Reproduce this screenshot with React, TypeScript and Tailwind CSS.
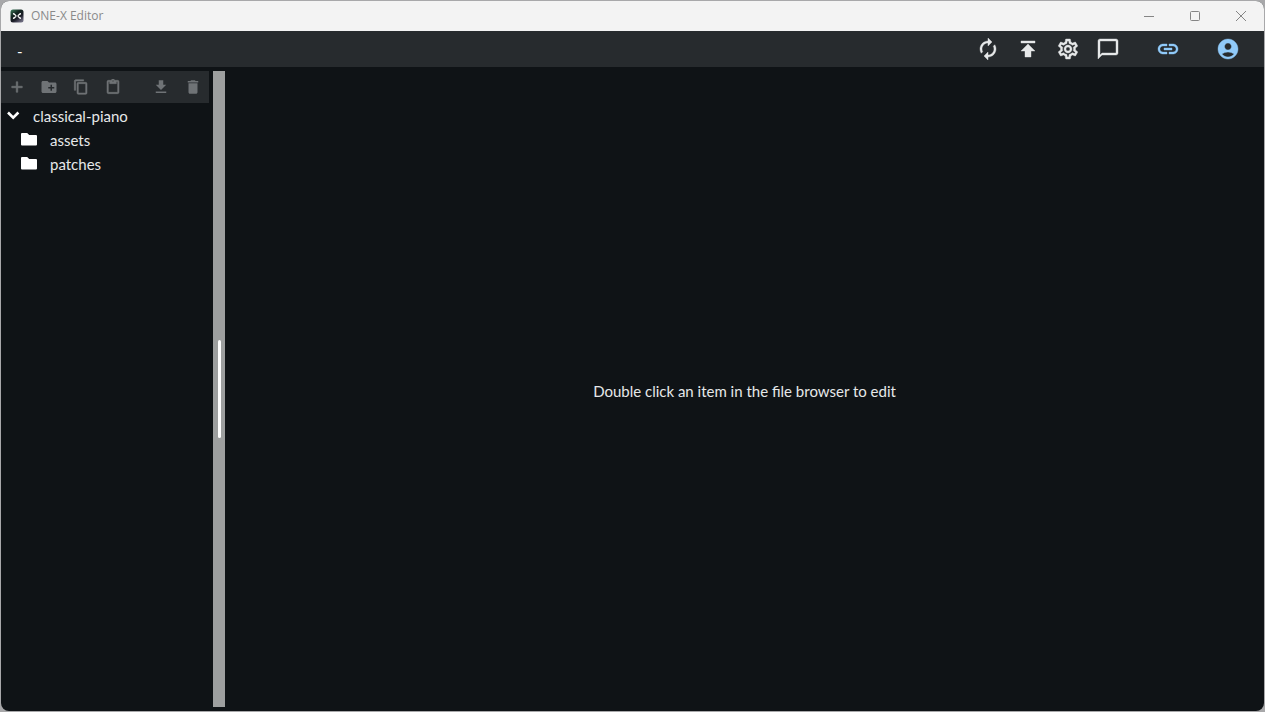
import React from "react";
import {
  MdAccountCircle,
  MdAdd,
  MdAutorenew,
  MdChatBubbleOutline,
  MdContentCopy,
  MdContentPaste,
  MdCreateNewFolder,
  MdDelete,
  MdFileDownload,
  MdLink,
  MdOutlineSettings,
  MdPublish,
} from "react-icons/md";

type ButtonProps = { label: string; children: React.ReactNode };

function AppIcon() {
  return (
    <svg viewBox="0 0 14 14" className="size-[14px]" aria-hidden="true">
      <defs>
        <linearGradient id="logo" x1="0" y1="0" x2="0.7" y2="1">
          <stop offset="0" stopColor="#3f8060" />
          <stop offset="0.4" stopColor="#12241f" />
          <stop offset="0.7" stopColor="#1c1d28" />
          <stop offset="1" stopColor="#6a687c" />
        </linearGradient>
      </defs>
      <rect x="0.5" y="0.5" width="13" height="13" rx="2.5" fill="url(#logo)" />
      <path d="M3.600 4.700 6.300 6.700M10.400 4.700 7.700 6.700M3.600 9.300 6.300 7.300M10.400 9.300 7.700 7.300" stroke="#fff" strokeWidth="1.200" />
      <g fill="#fff">
        <circle cx="3.700" cy="4.700" r="0.800" />
        <circle cx="10.300" cy="4.700" r="0.800" />
        <circle cx="3.700" cy="9.300" r="0.800" />
        <circle cx="10.300" cy="9.300" r="0.800" />
      </g>
    </svg>
  );
}

function WindowButton({ label, children }: ButtonProps) {
  return (
    <button type="button" aria-label={label} className="flex h-full w-[46px] items-center justify-center">
      <svg viewBox="0 0 12 12" className="size-3" fill="none" stroke="#858585" aria-hidden="true">
        {children}
      </svg>
    </button>
  );
}

function HeaderButton({ label, children }: ButtonProps) {
  return (
    <button type="button" aria-label={label} className="flex h-9 w-10 items-center justify-center [&_path[fill=none]]:stroke-none [&_svg]:stroke-[0.4]">
      {children}
    </button>
  );
}

function FileButton({ label, children }: ButtonProps) {
  return (
    <button type="button" aria-label={label} className="flex size-8 items-center justify-center [&_path[fill=none]]:stroke-none">
      {children}
    </button>
  );
}

function FolderRow({ name }: { name: string }) {
  return (
    <li>
      <button type="button" className="flex h-6 w-full items-center gap-3 pl-[19px] text-left">
        <svg viewBox="0 0 18 18" className="size-[18px]" fill="#fff" aria-hidden="true">
          <path d="M2 2h5.2l2 2H16q1 0 1 1v8.5q0 1-1 1H2q-1 0-1-1V3q0-1 1-1z" />
        </svg>
        <span>{name}</span>
      </button>
    </li>
  );
}

export default function App() {
  return (
    <div className="h-screen bg-[#a8a8aa] p-px font-['Lato',sans-serif] text-[#e6e8e9]">
      <div className="flex h-full flex-col overflow-hidden rounded-lg bg-[#0f1316]">
        <div className="flex h-[30px] shrink-0 items-center bg-[#f3f3f3] pb-px pl-[9px]">
          <AppIcon />
          <h1 className="pl-[7px] font-['Open_Sans',sans-serif] text-xs text-[#8a8a8a]">ONE-X Editor</h1>
          <div className="ml-auto flex h-full">
            <WindowButton label="Minimize">
              <path d="M1 6.5h10" />
            </WindowButton>
            <WindowButton label="Maximize">
              <rect x="1.5" y="1.5" width="9" height="9" rx="1" />
            </WindowButton>
            <WindowButton label="Close">
              <path d="M1 1l10 10M11 1 1 11" />
            </WindowButton>
          </div>
        </div>

        <header className="flex h-9 shrink-0 items-center bg-[#272b2e] px-4">
          <span className="pt-1 text-[15px] text-white">-</span>
          <div className="ml-auto flex">
            <HeaderButton label="Sync"><MdAutorenew size={24} /></HeaderButton>
            <HeaderButton label="Publish"><MdPublish size={24} /></HeaderButton>
            <HeaderButton label="Settings"><MdOutlineSettings size={24} /></HeaderButton>
            <HeaderButton label="Feedback"><MdChatBubbleOutline size={24} /></HeaderButton>
          </div>
          <div className="ml-5 flex gap-5 text-[#90caf9]">
            <HeaderButton label="Connection"><MdLink size={24} /></HeaderButton>
            <HeaderButton label="Account"><MdAccountCircle size={24} /></HeaderButton>
          </div>
        </header>

        <div className="flex min-h-0 flex-1 py-1">
          <aside className="w-[208px] shrink-0">
            <div className="flex h-8 bg-[#272b2e] text-[#6f7376]">
              <FileButton label="New file"><MdAdd size={18} strokeWidth={0.8} /></FileButton>
              <FileButton label="New folder"><MdCreateNewFolder size={18} /></FileButton>
              <FileButton label="Copy"><MdContentCopy size={16} strokeWidth={0.8} /></FileButton>
              <FileButton label="Paste"><MdContentPaste size={16} strokeWidth={0.8} /></FileButton>
              <div className="ml-auto flex">
                <FileButton label="Download"><MdFileDownload size={18} /></FileButton>
                <FileButton label="Delete"><MdDelete size={18} /></FileButton>
              </div>
            </div>
            <div className="pt-px text-[15px]">
              <button type="button" className="flex h-6 w-full items-center gap-3 pl-1 text-left">
                <svg viewBox="0 0 16 16" className="size-4" fill="none" stroke="#fff" strokeWidth="2.6" aria-hidden="true">
                  <path d="M3 4.500l5.200 5.200 5.200-5.200" />
                </svg>
                <span>classical-piano</span>
              </button>
              <ul>
                <FolderRow name="assets" />
                <FolderRow name="patches" />
              </ul>
            </div>
          </aside>
          <div role="separator" aria-orientation="vertical" className="ml-1 flex w-3 shrink-0 cursor-col-resize items-center justify-center bg-[#9d9f9f]">
            <div className="h-[98px] w-[3px] rounded-sm bg-white" />
          </div>
          <main className="flex min-w-0 flex-1 items-center justify-center pt-1">
            <p className="text-[15px]">Double click an item in the file browser to edit</p>
          </main>
        </div>
      </div>
    </div>
  );
}
